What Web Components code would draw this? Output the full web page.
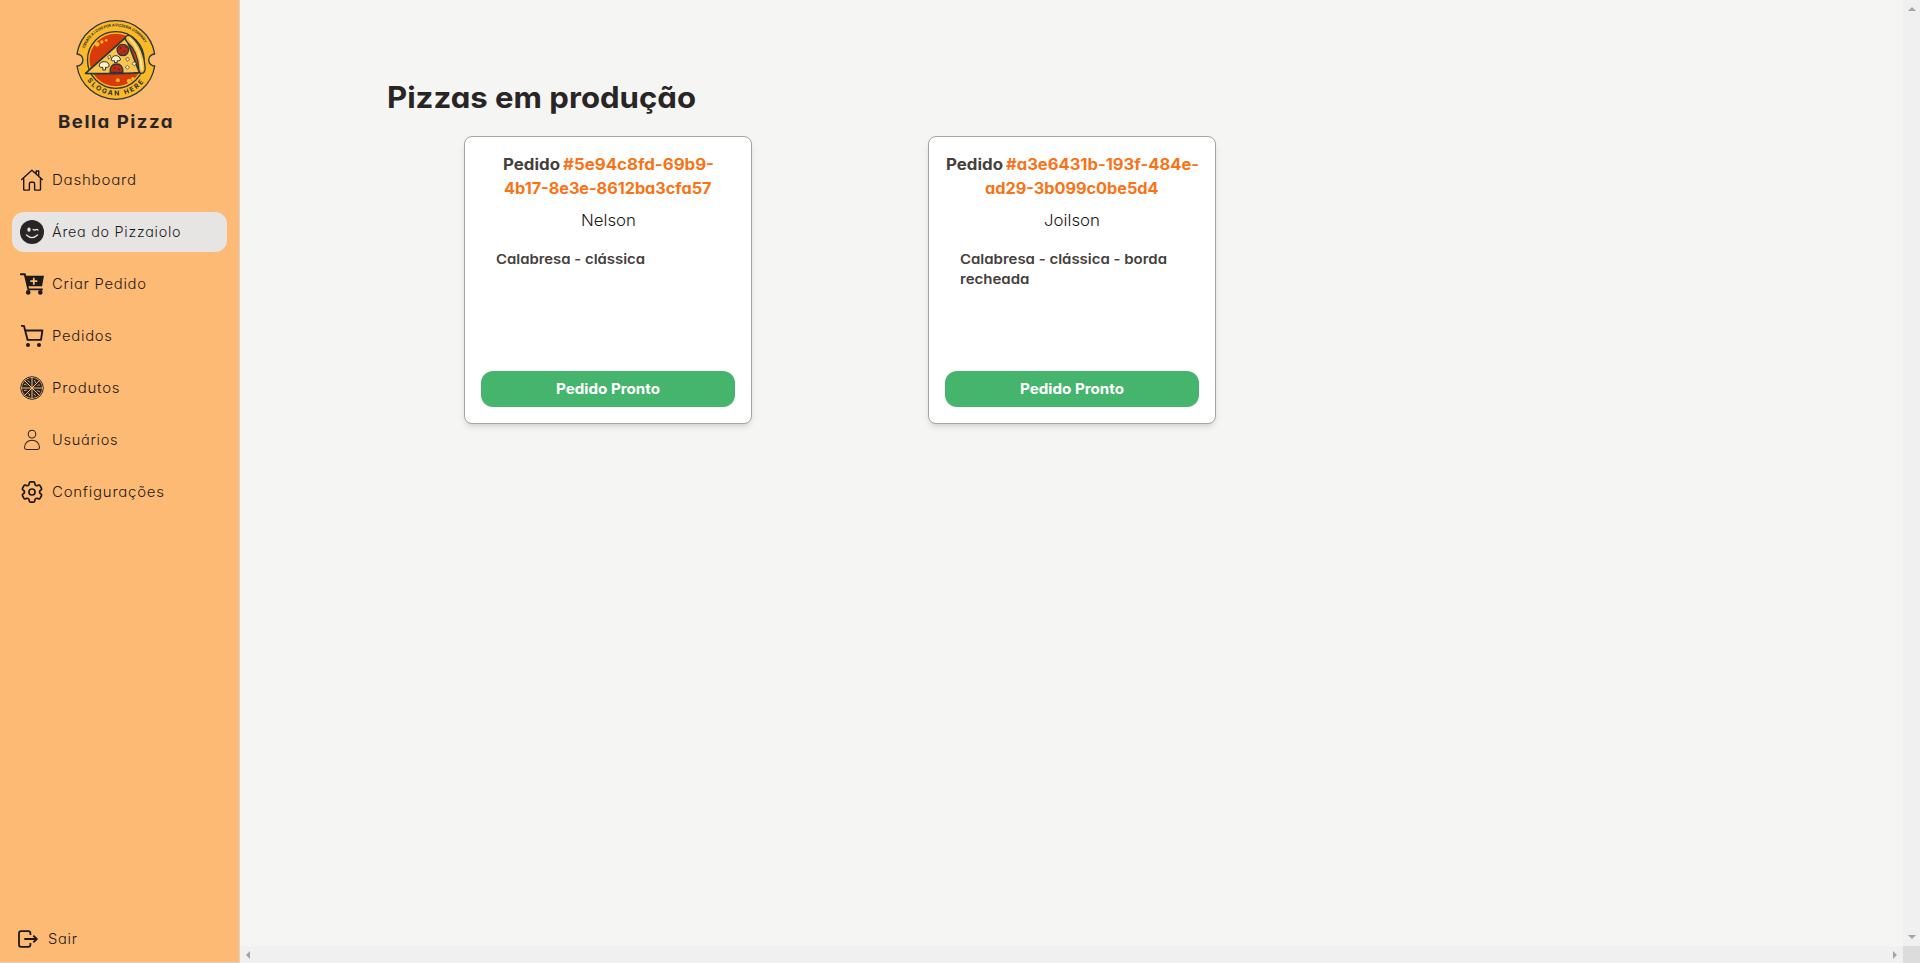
<!DOCTYPE html>
<html lang="pt-BR">
<head>
<meta charset="utf-8">
<title>Bella Pizza</title>
<style>
html,body{margin:0;height:100%;overflow:hidden}
body{font-family:Inter,"Open Sans",sans-serif;font-feature-settings:"cv11";color:#292524;background:#f5f5f4}
</style>
</head>
<body>
<pizza-app></pizza-app>
<script>
const define=(name,html,setup)=>{
  const t=document.createElement('template');t.innerHTML=html;
  customElements.define(name,class extends HTMLElement{
    connectedCallback(){
      if(this.shadowRoot)return;
      this.attachShadow({mode:'open'}).append(t.content.cloneNode(true));
      if(setup)setup(this,this.shadowRoot);
    }
  });
};

/* One line of text, widened so that it fills the width given in "w". */
define('fit-text',`<style>:host{display:inline-block;white-space:nowrap;text-align:left}span{display:inline-block;transform-origin:0 50%}</style><span><slot></slot></span>`,
(el,root)=>{
  const s=root.querySelector('span'),w=+el.getAttribute('w');
  const ls=parseFloat(getComputedStyle(s).letterSpacing)||0;
  const n=s.getBoundingClientRect().width;
  s.style.transform='scaleX('+w/(n-ls)+')';
  s.style.marginRight=(w-n)+'px';
});

const icons={
home:`<g fill="none" stroke="#1c1917" stroke-width="1.4" stroke-linecap="round" stroke-linejoin="round"><path d="M1.700 11.600 11.900 2.200l10.400 9.400M3.700 10.200v11.300q0 .6.6.6h4.500q.6 0 .6-.6v-5.700q0-1.500 1.500-1.500h2.200q1.500 0 1.500 1.500v5.700q0 .6.6.6h4.700q.6 0 .6-.6V10.200M16.200 5.600V3h2.500v5"/></g>`,
wink:`<circle cx="12" cy="12" r="12" fill="#292524"/><ellipse cx="9" cy="9.700" rx="1.650" ry="2.100" fill="#e7e5e4"/><path d="M13.200 9.400q.8 1.200 2.100.6q1.600-1.200 2.700.1M6.500 15q5.500 5.200 11 0" fill="none" stroke="#e7e5e4" stroke-width="1.300" stroke-linecap="round" stroke-linejoin="round"/>`,
cartplus:`<g fill="#1c1917"><path d="M4.500 3.700H24L22 14.200H8z"/><circle cx="8.200" cy="20.400" r="2.300"/><circle cx="20.300" cy="20.400" r="2.300"/></g><path d="M.8 2.200h4l3.500 15.200H22" fill="none" stroke="#1c1917" stroke-width="1.900" stroke-linecap="round" stroke-linejoin="round"/><path d="M13.800 5.700v7M10.300 9.200h7" stroke="#fdba74" stroke-width="1.800"/>`,
cart:`<g fill="none" stroke="#1c1917" stroke-width="1.900" stroke-linejoin="round"><path d="M1 1.900h3l3.600 14H21l1.400-9.400H5.200"/></g><circle cx="8" cy="21" r="2" fill="#1c1917"/><circle cx="19" cy="21" r="2" fill="#1c1917"/>`,
pizza:`<circle cx="12" cy="12" r="11.300" fill="none" stroke="#292524" stroke-width="1"/><circle cx="12" cy="12" r="10.200" fill="#292524"/><g stroke="#fdba74" stroke-width="1"><path d="M12 1v22M1 12h22M4.300 4.300l15.400 15.400M19.700 4.300 4.300 19.700"/></g><g fill="none" stroke="#fdba74" stroke-width=".8"><path d="M7.500 4.500l2.300 1.800M14.500 4l1.200 3M17.500 9.500q1.300-1.700 2.500 0M17 14.500l3 1.500M14 17.500l1.500 2.500M8 17.500q2 0 1.500 2.500M4 14.500l3-.5M4 8.500q2-1 3 1"/></g>`,
user:`<g fill="none" stroke="#292524" stroke-width="1.050"><ellipse cx="12" cy="6.100" rx="3.800" ry="3.900"/><path d="M12 12.300c-4.600 0-7.500 3-7.500 7.300q0 1.900 1.800 1.900h11.400q1.800 0 1.800-1.900c0-4.300-2.900-7.300-7.500-7.300z"/></g>`,
cog:`<g transform="translate(12 12) scale(1.120) translate(-12 -12)" fill="none" stroke="#1c1917" stroke-width="1.500"><path d="M9.594 3.94c.09-.542.56-.94 1.11-.94h2.593c.55 0 1.02.398 1.11.94l.213 1.281c.063.374.313.686.645.87.074.04.147.083.22.127.325.196.72.257 1.075.124l1.217-.456a1.125 1.125 0 0 1 1.37.49l1.296 2.247a1.125 1.125 0 0 1-.26 1.431l-1.003.827c-.293.241-.438.613-.43.992a7.723 7.723 0 0 1 0 .255c-.008.378.137.75.43.991l1.004.827c.424.35.534.955.26 1.43l-1.298 2.247a1.125 1.125 0 0 1-1.369.491l-1.217-.456c-.355-.133-.75-.072-1.076.124a6.47 6.47 0 0 1-.22.128c-.331.183-.581.495-.644.869l-.213 1.281c-.09.543-.56.94-1.11.94h-2.594c-.55 0-1.019-.398-1.11-.94l-.213-1.281c-.062-.374-.312-.686-.644-.87a6.52 6.52 0 0 1-.22-.127c-.325-.196-.72-.257-1.076-.124l-1.217.456a1.125 1.125 0 0 1-1.369-.49l-1.297-2.247a1.125 1.125 0 0 1 .26-1.431l1.004-.827c.292-.24.437-.613.43-.991a6.932 6.932 0 0 1 0-.255c.007-.38-.138-.751-.43-.992l-1.004-.827a1.125 1.125 0 0 1-.26-1.43l1.297-2.247a1.125 1.125 0 0 1 1.37-.491l1.216.456c.356.133.751.072 1.076-.124.072-.044.146-.086.22-.128.332-.183.582-.495.644-.869l.214-1.28Z"/><circle cx="12" cy="12" r="2.700"/></g>`,
exit:`<g transform="translate(2 2)" fill="none" stroke="#1c1917" stroke-width="1.800" stroke-linejoin="round"><path d="M12.400 6V4.200q0-2-2-2H3q-2 0-2 2v11.600q0 2 2 2h7.400q2 0 2-2V14M6.300 10h12.500M15.300 6.600 18.800 10l-3.500 3.400"/></g>`
};
define('ui-icon',`<style>:host{display:block;flex:none;width:24px;height:24px}svg{display:block}</style><svg width="24" height="24" viewBox="0 0 24 24"></svg>`,
(el,root)=>root.querySelector('svg').innerHTML=icons[el.getAttribute('name')]);

define('nav-item',`<style>
:host{display:flex;align-items:center;gap:8px;height:40px;padding:0 8px;border-radius:12px;font-size:14px;font-weight:350;line-height:20px;letter-spacing:.7px;color:#1c1917}
:host([active]){background:#e7e5e4}
</style><slot name="icon"></slot><slot></slot>`);

define('brand-logo',`<style>:host{display:block;width:80px;height:80px}svg{display:block;overflow:visible}text{font-family:Inter,sans-serif;font-weight:700;fill:#243036}</style>
<svg width="80" height="80" viewBox="48.500 30 240 240">
<path d="M51.400 132A118 118 0 0 1 284.600 132A18 18 0 0 0 284.600 168A118 118 0 0 1 51.400 168A18 18 0 0 0 51.400 132Z" fill="#fdb827" stroke="#26383c" stroke-width="4" stroke-linejoin="round"/>
<circle cx="168" cy="150" r="85" fill="#fdb827" stroke="#26383c" stroke-width="4"/>
<circle cx="168" cy="150" r="79" fill="#d93a08"/>
<g fill="#fdb827"><circle cx="112" cy="103" r="7"/><circle cx="126" cy="96" r="5"/><circle cx="139" cy="91" r="4"/><circle cx="174" cy="211" r="6"/><circle cx="208" cy="213" r="7"/><circle cx="219" cy="206" r="5"/></g>
<path d="M77 190 198 82 239 188Q180 192 77 190Z" fill="#fbc64b" stroke="#26383c" stroke-width="5" stroke-linejoin="round"/>
<path d="M197 80q8-8 18 0Q252 112 256 174q0 15-10 16-8 0-9-12-3-55-35-82-8-8-5-16z" fill="#fdbb35" stroke="#26383c" stroke-width="4"/>
<path d="M210 86q34 35 36 92" fill="none" stroke="#ffe29b" stroke-width="6" stroke-linecap="round"/>
<g fill="#bd2b16" stroke="#26383c" stroke-width="4"><circle cx="189" cy="120" r="17"/><path d="M151 187q-1-25 19-25t19 25z"/></g>
<g fill="#762015"><circle cx="183" cy="114" r="3"/><circle cx="194" cy="123" r="3"/><circle cx="184" cy="128" r="2"/><circle cx="197" cy="112" r="2"/><circle cx="164" cy="174" r="3"/><circle cx="177" cy="178" r="3"/></g>
<g fill="#fff0c4" stroke="#26383c" stroke-width="3"><path d="M118 169q0-14 15-14t15 14q-5 5-11 3v8h-8v-8q-7 2-11-3zM154 150q2-13 14-13t14 13q-5 4-10 2v6h-8v-6q-6 2-10-2z"/><path d="m144 139 7-4 2 7-7 5zM197 146l8-4 4 7-7 5zM216 161l7-6 6 6-5 7zM196 172l7-6 6 6-6 5z" stroke-width="2"/></g>
<path id="top" d="M74 115A100 100 0 0 1 262 115" fill="none"/><path id="bottom" d="M82 211A106 106 0 0 0 256 211" fill="none"/>
<text font-size="11"><textPath href="#top" textLength="228">CREATE A LOGO FOR A PIZZERIA COMPANY</textPath></text>
<text font-size="20"><textPath href="#bottom" textLength="198">SLOGAN HERE</textPath></text>
</svg>`);

define('side-bar',`<style>
:host{box-sizing:border-box;display:flex;flex-direction:column;width:240px;height:963px;padding:20px 12px 3px;background:#fdba74;border:solid #d6d3d1;border-width:0 1px 1px 0}
header{display:flex;flex-direction:column;align-items:center;width:208px;gap:8px;font-size:17.500px;font-weight:700;line-height:28px;letter-spacing:1.4px}
header fit-text{margin-right:2px}
nav{display:flex;flex-direction:column;gap:12px;margin-top:24px}
footer{margin-top:auto}
footer nav-item{padding:0 4px}
</style>
<header><brand-logo></brand-logo><fit-text w="114.500">Bella Pizza</fit-text></header>
<nav>
<nav-item><ui-icon slot="icon" name="home"></ui-icon><fit-text w="84">Dashboard</fit-text></nav-item>
<nav-item active><ui-icon slot="icon" name="wink"></ui-icon><fit-text w="128.500">Área do Pizzaiolo</fit-text></nav-item>
<nav-item><ui-icon slot="icon" name="cartplus"></ui-icon><fit-text w="94">Criar Pedido</fit-text></nav-item>
<nav-item><ui-icon slot="icon" name="cart"></ui-icon><fit-text w="60">Pedidos</fit-text></nav-item>
<nav-item><ui-icon slot="icon" name="pizza"></ui-icon><fit-text w="67.500">Produtos</fit-text></nav-item>
<nav-item><ui-icon slot="icon" name="user"></ui-icon><fit-text w="65.500">Usuários</fit-text></nav-item>
<nav-item><ui-icon slot="icon" name="cog"></ui-icon><fit-text w="112">Configurações</fit-text></nav-item>
</nav>
<footer><nav-item><ui-icon slot="icon" name="exit"></ui-icon><fit-text w="29">Sair</fit-text></nav-item></footer>`);

define('order-card',`<style>
:host{box-sizing:border-box;display:flex;flex-direction:column;width:288px;height:288px;padding:16px;background:#fff;border:1px solid #a8a29e;border-radius:8px;box-shadow:0 4px 6px -1px #0000001a,0 2px 4px -2px #0000001a;text-align:center;line-height:24px;font-size:15.500px}
h2{margin:0;font-size:15.500px;font-weight:700;color:#44403c}
.name{margin-top:8px;font-weight:350;color:#1c1917}
.items{margin:16px 14px 0 15px;text-align:left;font-size:13.700px;font-weight:600;line-height:20px;color:#44403c}
button{margin-top:auto;height:36px;padding:0;border:0;border-radius:12px;background:#45b56e;color:#fff;font:650 14px/20px Inter,sans-serif;font-feature-settings:"cv11"}
</style><h2><slot name="code"></slot></h2><div class="name"><slot name="name"></slot></div><div class="items"><slot></slot></div><button><fit-text w="104">Pedido Pronto</fit-text></button>`);

define('order-code',`<style>:host{display:block}.l{display:flex;justify-content:center;height:24px;gap:3px}.id{color:#f97316}</style>
<div class="l"><slot name="label"></slot><span class="id"><slot name="first"></slot></span></div><div class="l id"><slot name="rest"></slot></div>`);

define('production-page',`<style>
:host{display:block;flex:1;min-width:0;padding:79px 0 0 147px}
h1{margin:0;font-size:29.500px;font-weight:700;line-height:36px}
section{display:grid;grid-template-columns:repeat(2,288px);column-gap:176px;margin:21px 0 0 77px}
</style>
<h1><fit-text w="309">Pizzas em produção</fit-text></h1>
<section>
<order-card><order-code slot="code"><fit-text slot="label" w="57">Pedido</fit-text><fit-text slot="first" w="151">#5e94c8fd-69b9-</fit-text><fit-text slot="rest" w="207.500">4b17-8e3e-8612ba3cfa57</fit-text></order-code><fit-text slot="name" w="55">Nelson</fit-text><fit-text w="149">Calabresa - clássica</fit-text></order-card>
<order-card><order-code slot="code"><fit-text slot="label" w="57">Pedido</fit-text><fit-text slot="first" w="193">#a3e6431b-193f-484e-</fit-text><fit-text slot="rest" w="173.500">ad29-3b099c0be5d4</fit-text></order-code><fit-text slot="name" w="56">Joilson</fit-text><fit-text w="207">Calabresa - clássica - borda</fit-text><fit-text w="69.500">recheada</fit-text></order-card>
</section>`);

define('scroll-track',`<style>
:host{box-sizing:border-box;display:flex;justify-content:space-between;align-items:center;background:#f0f0f0;padding:0 5px 0 5px}
:host([vertical]){flex-direction:column;padding:7px 0 7px}
svg{display:block;fill:#a3a3a3}
.v{display:none}:host([vertical]) .v{display:block}:host([vertical]) .h{display:none}
</style>
<svg class="h" width="5" height="8"><path d="M5 0v8L1 4z"/></svg><svg class="h" width="5" height="8"><path d="M0 0v8l4-4z"/></svg>
<svg class="v" width="8" height="4"><path d="M0 4h8L4 0z"/></svg><svg class="v" width="8" height="4"><path d="M0 0h8L4 4z"/></svg>`);

define('pizza-app',`<style>
:host{display:flex;width:1920px;height:963px}
.view{display:grid;flex:1;grid-template:946px 17px / 1663px 17px}
.corner{background:#dcdcdc}
</style><side-bar></side-bar><div class="view"><production-page></production-page><scroll-track vertical></scroll-track><scroll-track></scroll-track><div class="corner"></div></div>`);
</script>
</body>
</html>
